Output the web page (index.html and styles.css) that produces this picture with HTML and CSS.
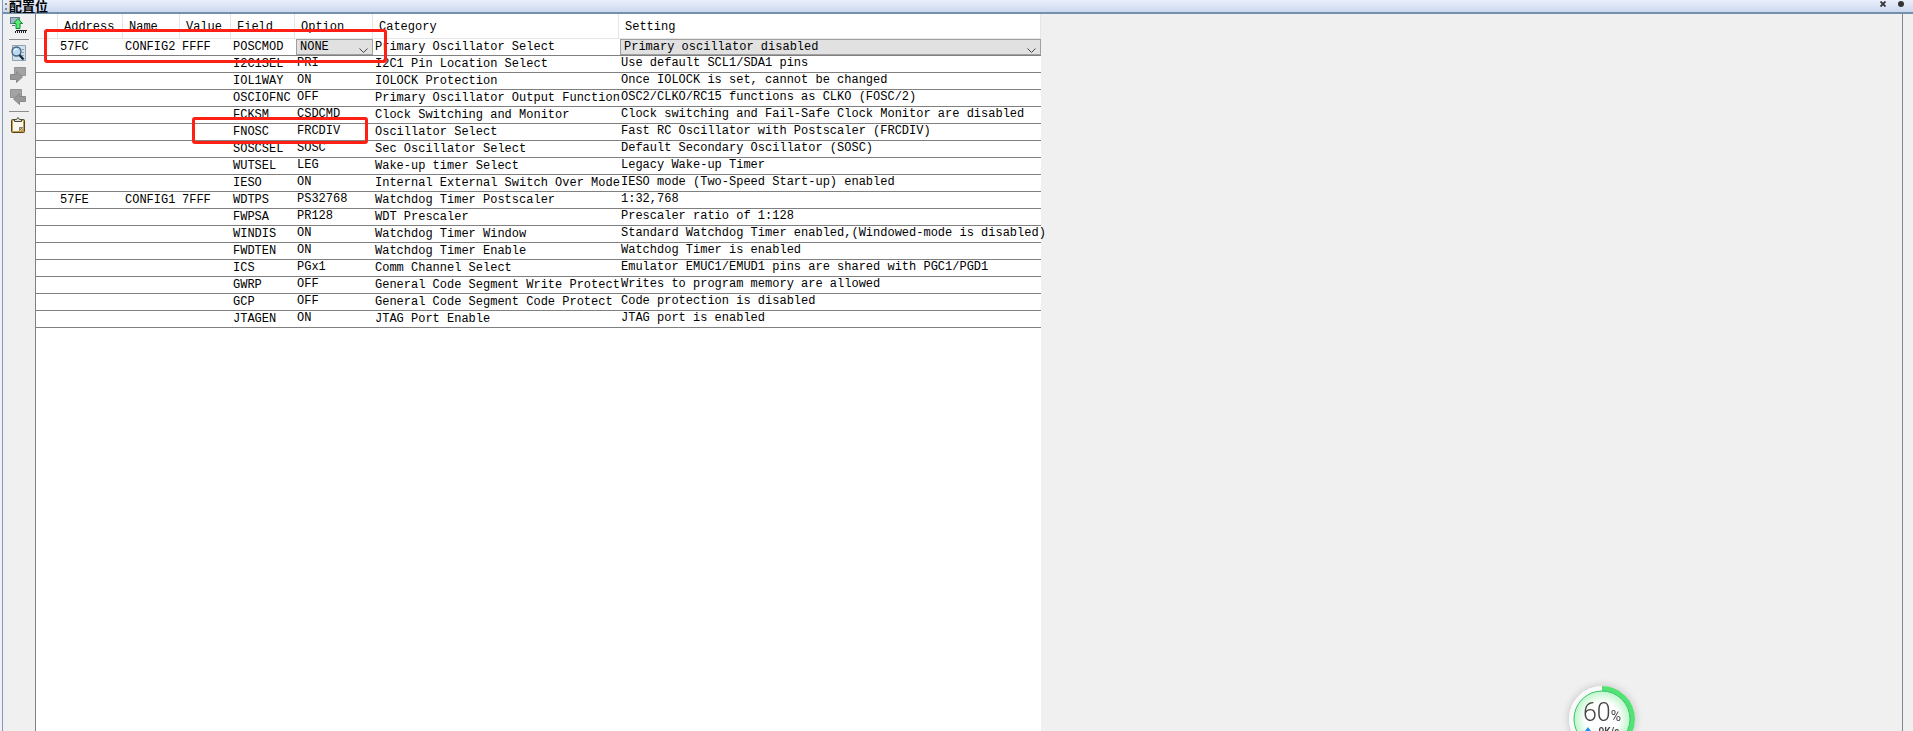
FILE: index.html
```html
<!DOCTYPE html>
<html lang="zh-CN">
<head>
    <meta charset="UTF-8">
    <title>配置位</title>
    <link rel="stylesheet" href="styles.css">
</head>
<body>
    <div class="window">
        <header class="titlebar">
            <div class="caption">
                <span class="grip"></span>
                <h1>配置位</h1>
            </div>
            <button class="title-btn" aria-label="关闭">
                <svg width="6" height="6" viewBox="0 0 6 6"><path d="M.500.500 5.500 5.500M5.500.500.500 5.500" stroke="#333" stroke-width="1.800"/></svg>
            </button>
            <button class="title-btn" aria-label="固定">
                <svg width="6" height="6" viewBox="0 0 6 6"><circle cx="3" cy="3" r="3" fill="#333"/></svg>
            </button>
        </header>

        <div class="content">
            <nav class="toolbar">
                <button aria-label="读取配置位">
                    <svg width="17" height="17" viewBox="0 0 17 17">
                        <rect x=".500" y=".500" width="9" height="6" fill="#a3b6c4" stroke="#5d7f96"/>
                        <path d="M2 8.500h3" stroke="#4d7693"/>
                        <path d="M8 1.500 12.500 6.500H10v5H6v-5H3.500z" fill="#55ee70" stroke="#16863b"/>
                        <path d="M6 13h11v1H6z" fill="#222"/>
                        <path d="M5 15h11" stroke="#222" stroke-width="2" stroke-dasharray="1 1"/>
                    </svg>
                </button>
                <hr>
                <button aria-label="查找">
                    <svg width="17" height="17" viewBox="0 0 17 17">
                        <path d="M2.500.500h13v15h-13z" fill="#d3e1ed" stroke="#8ea2b2"/>
                        <path d="M12 4.500h2M12 7.500h2M12 10.500h2" stroke="#8ea2b2"/>
                        <circle cx="6.500" cy="6.500" r="4.500" fill="#b9d9f4" stroke="#45637d" stroke-width="1.400"/>
                        <path d="M4 6.500a3 3 0 0 1 3-2.500" stroke="#fff" fill="none"/>
                        <path d="m9.500 10 4 4.500" stroke="#1b2d3c" stroke-width="2.500"/>
                    </svg>
                </button>
                <button aria-label="下一个" disabled>
                    <svg width="17" height="17" viewBox="0 0 17 17">
                        <path d="M4.500.500h11v8h-11z" fill="#a3a3a3" stroke="#949494"/>
                        <path d="M.500 7.500h6v-3l6 5.500-6 5.500v-3h-6z" fill="#989898" stroke="#898989"/>
                    </svg>
                </button>
                <button aria-label="上一个" disabled>
                    <svg width="17" height="17" viewBox="0 0 17 17">
                        <path d="M.500.500h11v8H.500z" fill="#a3a3a3" stroke="#949494"/>
                        <path d="M15.500 7.500h-6v-3l-6 5.500 6 5.500v-3h6z" fill="#989898" stroke="#898989"/>
                    </svg>
                </button>
                <hr>
                <button aria-label="剪贴板">
                    <svg width="17" height="17" viewBox="0 0 17 17">
                        <rect x="1.500" y="2.500" width="13" height="13" rx="1" fill="#c39b45" stroke="#55431a"/>
                        <path d="M3 4h10v7l-3 3H3z" fill="#f8f8ee"/>
                        <path d="M12.500 10.500h-3v3z" fill="#c9c9b8" stroke="#777"/>
                        <path d="M4.500 4.500h7v-2h-2L8 .500l-1.500 2h-2z" fill="#ddd" stroke="#4a4a3a"/>
                    </svg>
                </button>
            </nav>

            <main class="pane">
                <div class="sheet">
                    <table>
                        <colgroup>
                            <col class="c-mark"><col class="c-address"><col class="c-name"><col class="c-value">
                            <col class="c-field"><col class="c-option"><col class="c-category"><col class="c-setting">
                        </colgroup>
                        <thead>
                            <tr><th></th><th>Address</th><th>Name</th><th>Value</th><th>Field</th><th>Option</th><th>Category</th><th>Setting</th></tr>
                        </thead>
                        <tbody>
                            <tr>
                                <td></td><td>57FC</td><td>CONFIG2</td><td>FFFF</td><td>POSCMOD</td>
                                <td class="pick"><select aria-label="Option"><option>NONE</option></select></td>
                                <td>Primary Oscillator Select</td>
                                <td class="pick"><select aria-label="Setting"><option>Primary oscillator disabled</option></select></td>
                            </tr>
                            <tr><td></td><td></td><td></td><td></td><td>I2C1SEL</td><td>PRI</td><td>I2C1 Pin Location Select</td><td>Use default SCL1/SDA1 pins</td></tr>
                            <tr><td></td><td></td><td></td><td></td><td>IOL1WAY</td><td>ON</td><td>IOLOCK Protection</td><td>Once IOLOCK is set, cannot be changed</td></tr>
                            <tr><td></td><td></td><td></td><td></td><td>OSCIOFNC</td><td>OFF</td><td>Primary Oscillator Output Function</td><td>OSC2/CLKO/RC15 functions as CLKO (FOSC/2)</td></tr>
                            <tr><td></td><td></td><td></td><td></td><td>FCKSM</td><td>CSDCMD</td><td>Clock Switching and Monitor</td><td>Clock switching and Fail-Safe Clock Monitor are disabled</td></tr>
                            <tr><td></td><td></td><td></td><td></td><td>FNOSC</td><td>FRCDIV</td><td>Oscillator Select</td><td>Fast RC Oscillator with Postscaler (FRCDIV)</td></tr>
                            <tr><td></td><td></td><td></td><td></td><td>SOSCSEL</td><td>SOSC</td><td>Sec Oscillator Select</td><td>Default Secondary Oscillator (SOSC)</td></tr>
                            <tr><td></td><td></td><td></td><td></td><td>WUTSEL</td><td>LEG</td><td>Wake-up timer Select</td><td>Legacy Wake-up Timer</td></tr>
                            <tr><td></td><td></td><td></td><td></td><td>IESO</td><td>ON</td><td>Internal External Switch Over Mode</td><td>IESO mode (Two-Speed Start-up) enabled</td></tr>
                            <tr><td></td><td>57FE</td><td>CONFIG1</td><td>7FFF</td><td>WDTPS</td><td>PS32768</td><td>Watchdog Timer Postscaler</td><td>1:32,768</td></tr>
                            <tr><td></td><td></td><td></td><td></td><td>FWPSA</td><td>PR128</td><td>WDT Prescaler</td><td>Prescaler ratio of 1:128</td></tr>
                            <tr><td></td><td></td><td></td><td></td><td>WINDIS</td><td>ON</td><td>Watchdog Timer Window</td><td>Standard Watchdog Timer enabled,(Windowed-mode is disabled)</td></tr>
                            <tr><td></td><td></td><td></td><td></td><td>FWDTEN</td><td>ON</td><td>Watchdog Timer Enable</td><td>Watchdog Timer is enabled</td></tr>
                            <tr><td></td><td></td><td></td><td></td><td>ICS</td><td>PGx1</td><td>Comm Channel Select</td><td>Emulator EMUC1/EMUD1 pins are shared with PGC1/PGD1</td></tr>
                            <tr><td></td><td></td><td></td><td></td><td>GWRP</td><td>OFF</td><td>General Code Segment Write Protect</td><td>Writes to program memory are allowed</td></tr>
                            <tr><td></td><td></td><td></td><td></td><td>GCP</td><td>OFF</td><td>General Code Segment Code Protect</td><td>Code protection is disabled</td></tr>
                            <tr><td></td><td></td><td></td><td></td><td>JTAGEN</td><td>ON</td><td>JTAG Port Enable</td><td>JTAG port is enabled</td></tr>
                        </tbody>
                    </table>
                    <div class="highlight highlight-osc"></div>
                    <div class="highlight highlight-fnosc"></div>
                </div>
            </main>
        </div>
    </div>

    <!-- memory usage ball -->
    <div class="ball">
        <svg class="ring" width="66" height="66" viewBox="0 0 66 66">
            <defs>
                <radialGradient id="glow">
                    <stop offset="60%" stop-color="#fff"/>
                    <stop offset="100%" stop-color="#bdf5c9"/>
                </radialGradient>
            </defs>
            <circle cx="33" cy="33" r="33" fill="#fafafa"/>
            <circle cx="33" cy="33" r="30.500" fill="none" stroke="#55e274" stroke-width="5" pathLength="100" stroke-dasharray="60 40" transform="rotate(-90 33 33)"/>
            <circle cx="33" cy="33" r="28" fill="url(#glow)" stroke="#2fc668"/>
        </svg>
        <div class="ball-text">
            <div class="percent">60<small>%</small></div>
            <div class="speed"><svg width="6" height="8" viewBox="0 0 6 8"><path d="M3 0 6 4H4v4H2V4H0z" fill="#2492f5"/></svg>0K/s</div>
        </div>
    </div>
</body>
</html>
```
FILE: styles.css
```css
* {
    box-sizing: border-box;
}
body {
    margin: 0;
    background: #f0f0f0;
    color: #000;
    font-family: "Liberation Mono", "Noto Sans CJK SC", monospace;
    font-size: 12px;
    overflow: hidden;
}
button {
    display: flex;
    padding: 0;
    border: none;
    background: none;
}
.window {
    display: flex;
    flex-direction: column;
    height: 100vh;
    margin-left: 2px;
    border-left: 1px solid #7b9ac0;
}
.titlebar {
    display: flex;
    align-items: center;
    gap: 12px;
    height: 14px;
    padding: 0 9px 4px 2px;
    background: linear-gradient(#eaf0fb, #cbd8f0);
    border-bottom: 2px solid #7590ac;
}
.caption {
    display: flex;
    flex: 1;
    align-items: center;
    gap: 2px;
    padding-top: 4px;
}
.caption h1 {
    margin: 0;
    font-family: "Noto Sans CJK SC", sans-serif;
    font-size: 13px;
    font-weight: 700;
    line-height: 14px;
}
.grip {
    width: 2px;
    height: 7px;
    border-left: 2px dotted #888;
}
.content {
    display: flex;
    flex: 1;
    min-height: 0;
}
.toolbar {
    display: flex;
    flex-direction: column;
    align-items: center;
    gap: 5px;
    width: 32px;
    padding: 3px 6px 0 5px;
}
.toolbar hr {
    width: 20px;
    margin: 0;
    border: none;
    border-top: 1px solid #8c8c8c;
}
.pane {
    flex: 1;
    margin-right: 10px;
    border-left: 1px solid #808080;
    border-right: 1px solid #85858f;
}
.sheet {
    position: relative;
    width: max-content;
    height: 100%;
    background: #fff;
}
table {
    table-layout: fixed;
    width: 1005px;
    border-collapse: separate;
    border-spacing: 0;
}
.c-mark { width: 22px; }
.c-address { width: 65px; }
.c-name { width: 57px; }
.c-value { width: 51px; }
.c-field { width: 64px; }
.c-option { width: 78px; }
.c-category { width: 246px; }
th {
    height: 25px;
    padding: 2px 0 0 6px;
    border-right: 1px solid #e5e5e5;
    border-bottom: 1px solid #e5e5e5;
    font-weight: normal;
    text-align: left;
}
td {
    height: 17px;
    padding: 0 0 0 2px;
    border-bottom: 1px solid #808080;
    line-height: 16px;
    vertical-align: top;
    white-space: nowrap;
}
td:nth-child(6),
td:nth-child(8) {
    line-height: 14px;
}
td.pick {
    padding: 0 0 0 1px;
}
select {
    display: block;
    width: 100%;
    height: 16px;
    padding: 0 3px;
    border: 1px solid #a0a0a0;
    border-radius: 0;
    appearance: none;
    background: #e1e1e1 url("data:image/svg+xml,%3Csvg xmlns='http://www.w3.org/2000/svg' width='9' height='5'%3E%3Cpath d='M.5.5l4 4 4-4' fill='none' stroke='%23444'/%3E%3C/svg%3E") no-repeat right 4px bottom 1px;
    color: #000;
    font: inherit;
    line-height: 14px;
}
/* red marks over the table */
.highlight {
    position: absolute;
    border: 3px solid #ff2015;
    border-radius: 3px;
}
.highlight-osc {
    left: 8px;
    top: 15px;
    width: 343px;
    height: 34px;
}
.highlight-fnosc {
    left: 156px;
    top: 103px;
    width: 176px;
    height: 27px;
}
.ball {
    position: fixed;
    right: 278px;
    bottom: -21px;
    width: 66px;
    height: 66px;
    border-radius: 50%;
    box-shadow: 0 0 9px rgba(0, 0, 0, .2);
}
.ring {
    position: absolute;
}
.ball-text {
    position: relative;
    padding-top: 14px;
    color: #444;
    font-family: Roboto, sans-serif;
    text-align: center;
}
.percent {
    height: 27px;
    font-size: 25px;
    font-weight: 300;
    line-height: 25px;
}
.percent small {
    font-size: 14px;
    font-weight: 400;
}
.speed {
    display: flex;
    justify-content: center;
    gap: 8px;
    font-size: 10px;
    font-weight: 600;
    line-height: 10px;
}
```
